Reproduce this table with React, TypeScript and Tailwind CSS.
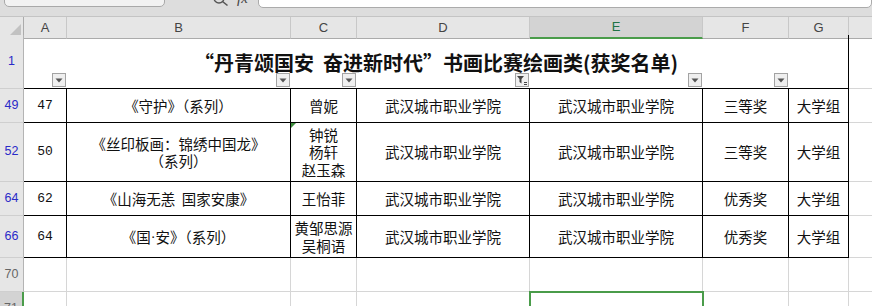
import React from "react";

const GRID = "grid grid-cols-[24px_43px_224px_66px_173px_173px_86px_60px_1fr]";
const CJK = "font-['Noto_Sans_CJK_SC',sans-serif]";

type Row = {
  head: string;
  h: string;
  no: string;
  work: React.ReactNode;
  author: React.ReactNode;
  prize: string;
  mark?: boolean;
};

const rows: Row[] = [
  { head: "49", h: "h-[34px]", no: "47", work: "《守护》（系列）", author: "曾妮", prize: "三等奖" },
  {
    head: "52",
    h: "h-[59px]",
    no: "50",
    work: (
      <>
        《丝印板画：锦绣中国龙》
        <br />
        （系列）
      </>
    ),
    author: (
      <>
        钟锐
        <br />
        杨轩
        <br />
        赵玉森
      </>
    ),
    prize: "三等奖",
    mark: true,
  },
  { head: "64", h: "h-[34px]", no: "62", work: "《山海无恙\u00a0\u00a0国家安康》", author: "王怡菲", prize: "优秀奖" },
  {
    head: "66",
    h: "h-[42px]",
    no: "64",
    work: (
      <>
        《国<span className="font-['Liberation_Sans',sans-serif]">·</span>安》（系列）
      </>
    ),
    author: (
      <>
        黄邹思源
        <br />
        吴桐语
      </>
    ),
    prize: "优秀奖",
  },
];

function RowHead({ n, blue, active, className = "" }: { n: string; blue?: boolean; active?: boolean; className?: string }) {
  return (
    <div
      className={`flex items-center justify-center border-b border-b-[#cfcfcf] font-['Liberation_Sans',sans-serif] text-[12.5px] ${
        active ? "border-r-2 border-r-[#4a9c4a] bg-[#d3d3d3]" : "border-r border-r-[#b4b4b4] bg-[#e6e6e6]"
      } ${blue ? "text-[#2a2ac8]" : "text-[#666]"} ${className}`}
    >
      {n}
    </div>
  );
}

function FilterBtn({ col, active }: { col: string; active?: boolean }) {
  return (
    <div
      className={`${col} row-start-1 mb-[2px] mr-px flex h-[14px] w-[14px] items-center justify-center self-end justify-self-end border border-[#a3a3a3] bg-[#efefef]`}
    >
      {active ? (
        <svg width="12" height="12" viewBox="0 0 12 12">
          <path d="M1 2h7L5.5 5v4.5L3.5 8V5z" fill="#444" />
          <path d="M8 8.5h3M8 10.5h3" stroke="#444" strokeWidth="1" />
        </svg>
      ) : (
        <svg width="8" height="5" viewBox="0 0 8 5">
          <path d="M0.5 0.5h7L4 4.5z" fill="#555" />
        </svg>
      )}
    </div>
  );
}

export default function App() {
  const letters = ["A", "B", "C", "D", "E", "F", "G"];
  return (
    <div className={`h-[306px] w-[872px] overflow-hidden bg-white ${CJK}`}>
      {/* formula bar, cut off at the top */}
      <div className="flex h-[17px] items-start overflow-hidden border-b border-[#c4c4c4] bg-[#dddddd]">
        <div className="-mt-[20px] ml-[4px] flex h-[27px] w-[161px] items-end justify-center rounded-[5px] border border-[#a9a9a9] bg-[#f2f2f2] pb-[3px] font-['Liberation_Sans',sans-serif] text-[13px] leading-[14px] text-[#333]">
          E71
        </div>
        <svg className="-mt-[7px] ml-[47px]" width="20" height="14" viewBox="0 0 20 14">
          <circle cx="7" cy="5" r="5" fill="none" stroke="#555" strokeWidth="1.4" />
          <path d="M10.5 8.5l5 4" stroke="#555" strokeWidth="1.6" />
        </svg>
        <div className="-mt-[9px] ml-[5px] font-['Liberation_Serif',serif] text-[15px] italic leading-[14px] text-[#444]">fx</div>
        <div className="-mt-[20px] ml-[10px] h-[28px] flex-1 rounded-[5px] border border-[#ababab] bg-white" />
      </div>

      {/* column headers */}
      <div className={`${GRID} h-[18px] font-['Liberation_Sans',sans-serif] text-[13px] text-[#444]`}>
        <div className="flex items-end justify-end border-b border-r border-[#ababab] bg-[#e6e6e6] pb-[2px] pr-[2px]">
          <svg width="12" height="12" viewBox="0 0 12 12">
            <path d="M12 0V12H0z" fill="#c2c2c2" />
          </svg>
        </div>
        {letters.map((l) =>
          l === "E" ? (
            <div key={l} className="flex items-center justify-center border-b-2 border-r border-b-[#4a9c4a] border-r-[#c8c8c8] bg-[#d3d3d3] text-[#217346]">
              {l}
            </div>
          ) : (
            <div key={l} className="flex items-center justify-center border-b border-r border-b-[#ababab] border-r-[#c8c8c8] bg-[#e6e6e6]">
              {l}
            </div>
          )
        )}
        <div className="border-b border-b-[#ababab] bg-[#e6e6e6]" />
      </div>

      {/* title row */}
      <div className={`${GRID} h-[54px]`}>
        <RowHead n="1" blue className="col-start-1 row-start-1" />
        <div className="col-span-7 col-start-2 row-start-1 border-b border-r border-black pt-[14px] text-center text-[20px] font-bold leading-[28px] text-[#111]">
          “丹青颂国安&nbsp;&nbsp;奋进新时代”书画比赛绘画类(获奖名单)
        </div>
        <div className="col-start-9 row-start-1 border-b border-[#d6d6d6]" />
        <FilterBtn col="col-start-2" />
        <FilterBtn col="col-start-3" />
        <FilterBtn col="col-start-4" />
        <FilterBtn col="col-start-5" active />
        <FilterBtn col="col-start-6" />
        <FilterBtn col="col-start-7" />
      </div>

      {/* data rows */}
      {rows.map((r) => (
        <div key={r.head} className={`${GRID} ${r.h} text-[14.5px] leading-[17.5px] text-[#111]`}>
          <RowHead n={r.head} blue />
          <div className="flex items-center justify-center border-b border-r border-black font-['Liberation_Mono',monospace] text-[13px]">
            {r.no}
          </div>
          <div className="flex items-center justify-center border-b border-r border-black text-center">{r.work}</div>
          <div className="relative flex items-center justify-center border-b border-r border-black text-center">
            {r.mark && <div className="absolute left-0 top-0 h-0 w-0 border-r-[5px] border-t-[5px] border-r-transparent border-t-[#3c8c3c]" />}
            {r.author}
          </div>
          <div className="flex items-center justify-center border-b border-r border-black">武汉城市职业学院</div>
          <div className="flex items-center justify-center border-b border-r border-black">武汉城市职业学院</div>
          <div className="flex items-center justify-center border-b border-r border-black">{r.prize}</div>
          <div className="flex items-center justify-center border-b border-r border-black">大学组</div>
          <div className="border-b border-[#d6d6d6]" />
        </div>
      ))}

      {/* empty rows */}
      {["70", "71"].map((n) => (
        <div key={n} className={`${GRID} h-[34px]`}>
          <RowHead n={n} active={n === "71"} />
          {letters.map((l) => (
            <div key={l} className="relative border-b border-r border-[#d6d6d6]">
              {n === "71" && l === "E" && <div className="absolute -left-px -top-px bottom-0 right-[-2px] border-2 border-[#4a9c4a]" />}
            </div>
          ))}
          <div className="border-b border-[#d6d6d6]" />
        </div>
      ))}
    </div>
  );
}
